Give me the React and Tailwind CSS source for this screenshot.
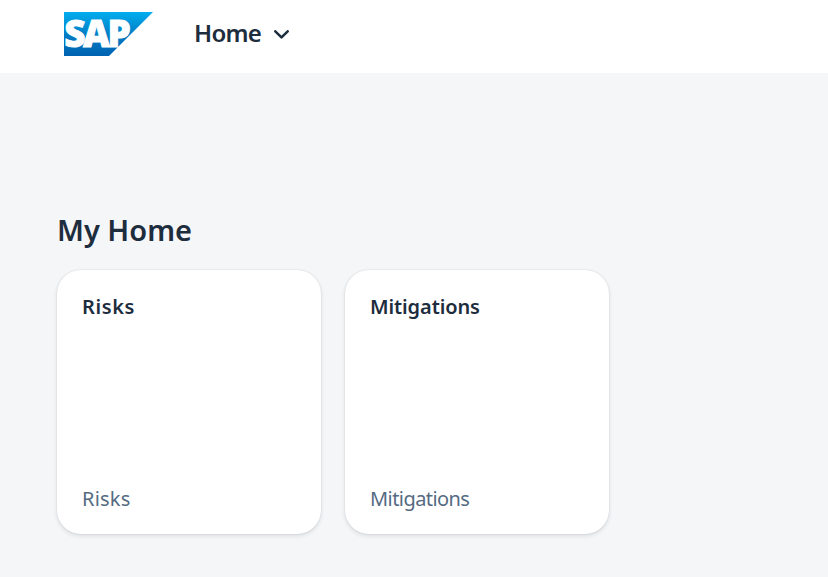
const tiles = [
  { title: 'Risks', footer: 'Risks', titleSpacing: 'tracking-[0.6px]', footerSpacing: 'tracking-[0.2px]' },
  { title: 'Mitigations', footer: 'Mitigations', titleSpacing: 'tracking-[-0.1px]', footerSpacing: 'tracking-[-0.57px]' },
];

function SapLogo() {
  return (
    <svg className="block h-11 w-[89px] overflow-visible" viewBox="0 0 89 44" role="img" aria-label="SAP">
      <defs>
        <linearGradient id="sapBlue" x1="0" y1="0" x2="0" y2="1">
          <stop offset="0" stopColor="#00aeef" />
          <stop offset="0.22" stopColor="#0099dc" />
          <stop offset="0.55" stopColor="#007ac4" />
          <stop offset="1" stopColor="#0062b1" />
        </linearGradient>
      </defs>
      <path d="M0 0H89L45 44H0Z" fill="url(#sapBlue)" />
      <text
        transform="translate(0.2 34.8) scale(1.01 1)"
        fill="#fff"
        stroke="#fff"
        strokeWidth="0.9"
        fontFamily="'Open Sans', sans-serif"
        fontWeight="800"
        fontSize="36.5"
        letterSpacing="-2.4"
      >
        SAP
      </text>
    </svg>
  );
}

function Tile({ title, footer, titleSpacing, footerSpacing }) {
  return (
    <article className="flex h-[264px] w-[264px] flex-col justify-between rounded-3xl bg-white px-[25px] pt-[23px] pb-[21px] shadow-[0_0_2px_rgba(34,53,72,0.14),0_2px_4px_rgba(34,53,72,0.12)]">
      <h3 className={`text-[20px] leading-7 font-semibold text-[#1d2d3e] ${titleSpacing}`}>{title}</h3>
      <p className={`text-[20px] leading-7 text-[#556b82] ${footerSpacing}`}>{footer}</p>
    </article>
  );
}

export default function App() {
  return (
    <div className="h-[577px] w-full overflow-hidden bg-[#f5f6f7] font-['Noto_Sans',sans-serif] text-[#1d2d3e]">
      <header className="flex h-[73px] items-start bg-white pt-3 pl-16">
        <SapLogo />
        <button className="ml-[41px] flex h-11 items-center gap-[13px]">
          <span className="-mt-0.5 text-[24px] leading-8 font-semibold tracking-[-0.75px]">Home</span>
          <svg className="h-[9px] w-[15px]" viewBox="0 0 15 9" fill="none" stroke="#1d2d3e" strokeWidth="2.5" strokeLinecap="round" strokeLinejoin="round">
            <path d="M1.3 1.3L7.5 7.4L13.7 1.3" />
          </svg>
        </button>
      </header>
      <main className="pt-[137px] pl-[57px]">
        <h2 className="text-[29px] leading-10 font-semibold">My Home</h2>
        <div className="mt-5 flex gap-6">
          {tiles.map((tile) => (
            <Tile key={tile.title} {...tile} />
          ))}
        </div>
      </main>
    </div>
  );
}
